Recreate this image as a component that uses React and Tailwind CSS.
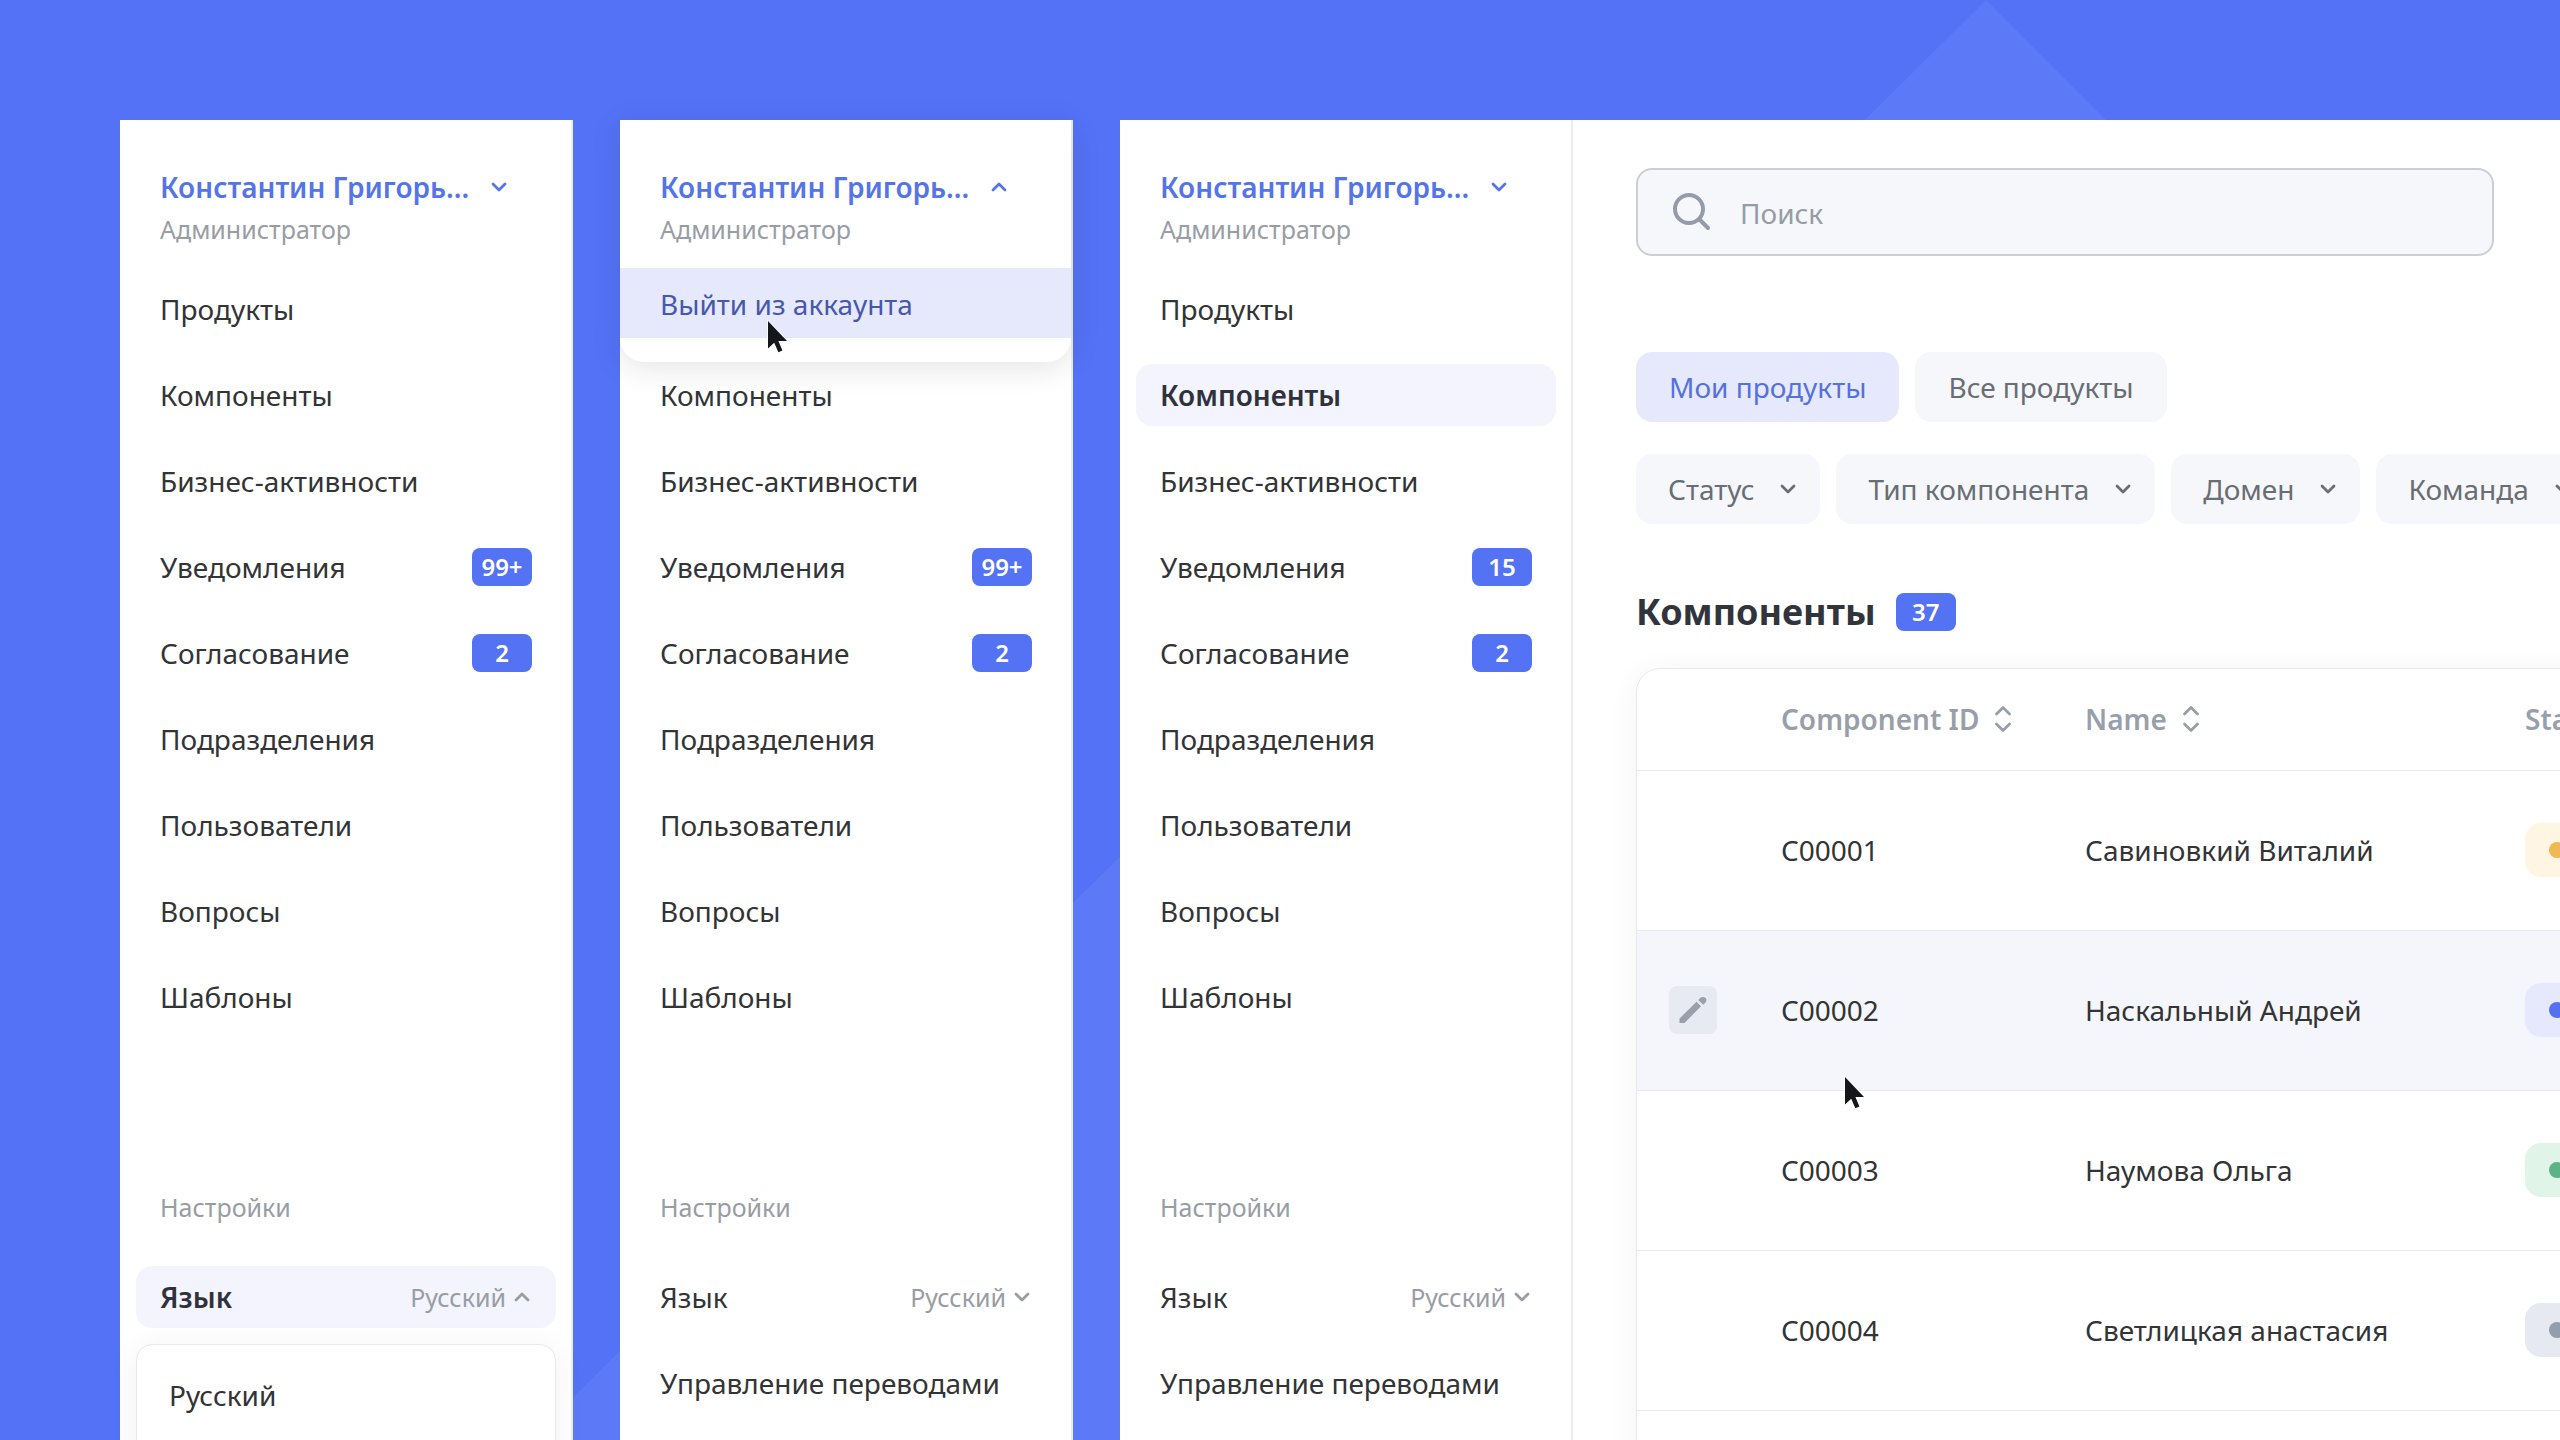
const NAV = ["Продукты", "Компоненты", "Бизнес-активности", "Уведомления", "Согласование", "Подразделения", "Пользователи", "Вопросы", "Шаблоны"];

const FILTERS = ["Статус", "Тип компонента", "Домен", "Команда"];

const ROWS = [
    { id: "C00001", name: "Савиновкий Виталий", pill: "bg-[#fef5e3]", dot: "bg-[#efb955]" },
    { id: "C00002", name: "Наскальный Андрей", pill: "bg-[#e6e9fc]", dot: "bg-[#5472f0]", hovered: true },
    { id: "C00003", name: "Наумова Ольга", pill: "bg-[#e0f5e8]", dot: "bg-[#5cb388]" },
    { id: "C00004", name: "Светлицкая анастасия", pill: "bg-[#e6e9f2]", dot: "bg-[#939dac]" },
];

function Chevron({ up, className = "" }) {
    return (
        <svg viewBox="0 0 16 10" className={`h-[10px] w-4 shrink-0 ${className}`} fill="none" stroke="currentColor" strokeWidth="2.8" strokeLinecap="round" strokeLinejoin="round" aria-hidden="true">
            <path d={up ? "M2 8 8 2 14 8" : "M2 2 8 8 14 2"} />
        </svg>
    );
}

function SortIcon() {
    return (
        <svg viewBox="0 0 16 28" className="h-7 w-4 shrink-0" fill="none" stroke="currentColor" strokeWidth="2.8" strokeLinecap="round" strokeLinejoin="round" aria-hidden="true">
            <path d="M1.5 9 8 2.500 14.500 9M1.500 19 8 25.500 14.500 19" />
        </svg>
    );
}

function Cursor({ className }) {
    return (
        <svg viewBox="0 0 24 36" className={`pointer-events-none absolute z-20 h-9 w-6 ${className}`} aria-hidden="true">
            <path d="M2 2V29.500L8.200 23.700 12.400 33.200 16.400 31.500 12.400 22H21Z" fill="#14161a" stroke="#fff" strokeWidth="1.6" strokeLinejoin="round" paintOrder="stroke" />
        </svg>
    );
}

function Badge({ children }) {
    return <span className="flex h-[38px] w-[60px] items-center justify-center rounded-lg bg-[#5472f4] text-2xl leading-[34px] font-semibold text-white">{children}</span>;
}

function NavItem({ label, active, covered, children }) {
    return (
        <a href="#" className={`flex h-[62px] items-center justify-between rounded-2xl px-6 ${active ? "bg-[#f3f4fd] font-semibold text-[#2f323d]" : ""} ${covered ? "invisible" : ""}`}>
            {label}
            {children}
        </a>
    );
}

function Sidebar({ active, badges, menuOpen, languageOpen }) {
    return (
        <aside className="relative w-[453px] shrink-0 border-r-2 border-[#ecedf1] bg-white pt-12 pr-[15px] pl-4 text-[28px] leading-[38px] text-[#323436]">
            {menuOpen && (
                <div className="absolute inset-x-0 top-0 z-10 rounded-b-3xl bg-white pt-[148px] pb-6 shadow-[0_6px_30px_rgba(30,30,40,0.12)]">
                    <button type="button" className="flex h-[70px] w-full items-center bg-[#e6e9fb] px-10 pt-0.5 text-[#4757ac]">Выйти из аккаунта</button>
                    <Cursor className="top-[199px] left-[146px]" />
                </div>
            )}
            <div className="relative z-10 px-6">
                <button type="button" aria-expanded={!!menuOpen} className="flex items-center gap-[22px] font-semibold whitespace-nowrap text-[#5574e8]">
                    Константин Григорь...
                    <Chevron up={menuOpen} />
                </button>
                <p className="mt-1.5 text-[25px] leading-[34px] text-[#989da5]">Администратор</p>
            </div>

            <nav className="mt-8 flex flex-col gap-6">
                {NAV.map((label, i) => (
                    <NavItem key={label} label={label} active={label === active} covered={menuOpen && i === 0}>
                        {badges[label] && <Badge>{badges[label]}</Badge>}
                    </NavItem>
                ))}
            </nav>

            <p className="mt-[162px] px-6 text-[25px] leading-[34px] text-[#989da5]">Настройки</p>
            <div className="relative mt-[42px] flex flex-col gap-6">
                <button type="button" aria-expanded={!!languageOpen} className={`flex h-[62px] items-center justify-between rounded-2xl pr-[26px] pl-6 ${languageOpen ? "bg-[#f3f4fd] font-semibold text-[#2f323d]" : ""}`}>
                    Язык
                    <span className="flex items-center gap-2 text-[25px] font-normal text-[#989da5]">
                        Русский
                        <Chevron up={languageOpen} />
                    </span>
                </button>
                <NavItem label="Управление переводами" covered={languageOpen} />
                {languageOpen && (
                    <div className="absolute inset-x-0 top-[78px] rounded-2xl border border-[#e9e9ec] bg-white pt-[15px] pb-24 shadow-[0_4px_32px_rgba(30,30,40,0.06)]">
                        <button type="button" className="flex h-[70px] w-full items-center px-8">Русский</button>
                    </div>
                )}
            </div>
        </aside>
    );
}

function ComponentsTable() {
    return (
        <div className="mt-8 w-[1400px] overflow-hidden rounded-3xl border border-[#e8e9eb] shadow-[0_4px_32px_rgba(30,30,40,0.05)]">
            <table className="w-full table-fixed text-left">
                <thead>
                    <tr className="h-[101px] text-[#989fab]">
                        <td className="w-28" />
                        <th className="w-[304px] pl-8 font-semibold">
                            <button type="button" className="flex items-center gap-4 whitespace-nowrap">Component ID <SortIcon /></button>
                        </th>
                        <th className="w-[440px] px-8 font-semibold">
                            <button type="button" className="flex items-center gap-4">Name <SortIcon /></button>
                        </th>
                        <th className="px-8 font-semibold">Status</th>
                    </tr>
                </thead>
                <tbody>
                    {ROWS.map((row) => (
                        <tr key={row.id} className={`h-40 border-t border-[#e8e9eb] ${row.hovered ? "bg-[#f5f6fb]" : ""}`}>
                            <td className="px-8">
                                {row.hovered && (
                                    <button type="button" aria-label={`Edit ${row.id}`} className="flex size-12 items-center justify-center rounded-lg bg-[#e7eaf2] text-[#98a0aa]">
                                        <svg viewBox="0 0 28 28" className="size-7" fill="currentColor" aria-hidden="true">
                                            <path d="M0.500 27V22.500L17.500 5.700 22 10.200 5.500 27ZM19.200 4 21.200 2Q24 -0.200 26.600 2 28.400 4.200 26.300 6.800L24.200 8.800Z" />
                                        </svg>
                                    </button>
                                )}
                            </td>
                            <td className="relative px-8">
                                {row.id}
                                {row.hovered && <Cursor className="top-[144px] left-[94px]" />}
                            </td>
                            <td className="px-8">{row.name}</td>
                            <td className="px-8">
                                <span className={`flex h-[54px] w-48 items-center rounded-2xl px-6 ${row.pill}`}>
                                    <span className={`size-4 rounded-full ${row.dot}`} />
                                </span>
                            </td>
                        </tr>
                    ))}
                    <tr className="h-40 border-t border-[#e8e9eb]"><td colSpan={4} /></tr>
                </tbody>
            </table>
        </div>
    );
}

export default function App() {
    const badges = { "Уведомления": "99+", "Согласование": "2" };

    return (
        <div className="relative flex h-screen gap-[47px] overflow-hidden bg-[#5472f6] pt-[120px] pl-[120px] font-['Noto_Sans',sans-serif]">
            <svg viewBox="0 0 2560 1440" preserveAspectRatio="xMinYMin slice" className="absolute inset-0 h-full w-full" aria-hidden="true">
                <path d="M1986 0 3426 1440H530Z" fill="#5c79f7" />
            </svg>

            <Sidebar badges={badges} languageOpen />
            <Sidebar badges={badges} menuOpen />

            <div className="relative flex min-w-0 flex-1 bg-white">
                <Sidebar active="Компоненты" badges={{ ...badges, "Уведомления": "15" }} />

                <main className="min-w-0 flex-1 overflow-hidden pt-12 pl-[63px] text-[28px] leading-[38px] text-[#323436]">
                    <div className="mr-[66px] flex h-[88px] items-center gap-7 rounded-2xl border-2 border-[#cbced2] bg-[#f5f7fb] px-[34px]">
                        <svg viewBox="0 0 40 40" className="size-10 shrink-0" fill="none" stroke="#949baa" strokeWidth="4" strokeLinecap="round" aria-hidden="true">
                            <circle cx="17" cy="17" r="14" />
                            <path d="M27.500 27.500 36 36" />
                        </svg>
                        <input type="search" aria-label="Поиск" placeholder="Поиск" className="min-w-0 flex-1 bg-transparent pt-0.5 outline-none placeholder:text-[#969ca6]" />
                    </div>

                    <div className="mt-24 flex gap-4">
                        <button type="button" className="h-[70px] rounded-2xl bg-[#e6e9fb] px-[33px] text-[#5571dc]">Мои продукты</button>
                        <button type="button" className="h-[70px] rounded-2xl bg-[#f6f7fb] px-[33px] text-[#696d74]">Все продукты</button>
                    </div>
                    <div className="mt-8 flex gap-4">
                        {FILTERS.map((label) => (
                            <button key={label} type="button" className="flex h-[70px] shrink-0 items-center gap-[26px] rounded-2xl bg-[#f5f7fa] pr-6 pl-8 whitespace-nowrap text-[#696d74]">
                                {label}
                                <Chevron />
                            </button>
                        ))}
                    </div>

                    <div className="mt-16 flex items-center gap-5">
                        <h2 className="text-4xl leading-[48px] font-bold text-[#32343c]">Компоненты</h2>
                        <Badge>37</Badge>
                    </div>
                    <ComponentsTable />
                </main>
            </div>
        </div>
    );
}
